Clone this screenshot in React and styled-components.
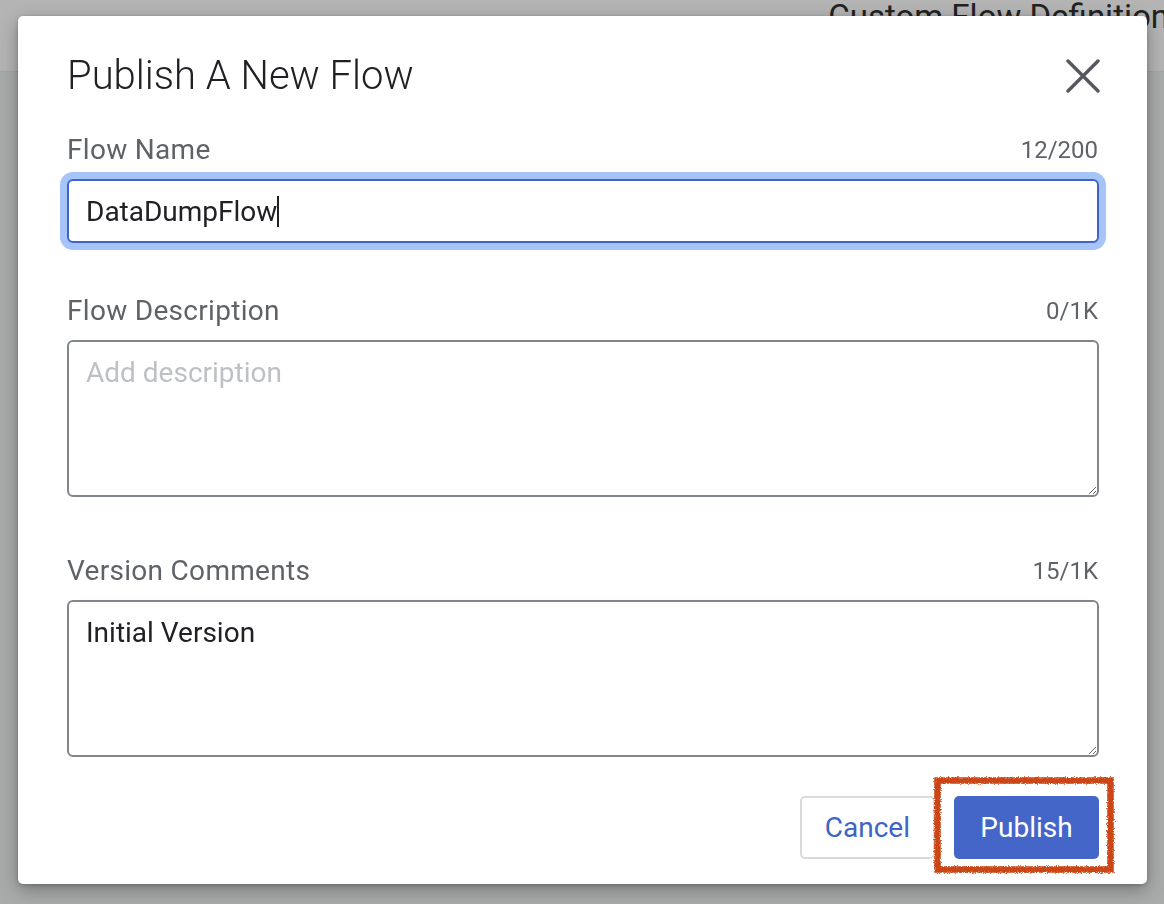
import React from "react";
import styled, { createGlobalStyle } from "styled-components";

const GlobalStyle = createGlobalStyle`
  html, body {
    margin: 0;
    padding: 0;
    height: 100%;
  }
  body {
    font-family: Roboto, "Liberation Sans", Arial, sans-serif;
    background: #a9aaaa;
    overflow: hidden;
  }
`;

const App = () => {
  return (
    <>
      <GlobalStyle />
      <Page>
        <Header>
          <HeaderTitle>Custom Flow Definition</HeaderTitle>
        </Header>
      </Page>

      <Backdrop>
        <Modal>
          <ModalHeader>
            <Title>Publish A New Flow</Title>
            <CloseButton aria-label="Close">
              <svg width="34" height="34" viewBox="0 0 34 34">
                <path
                  d="M2 2 L32 32 M32 2 L2 32"
                  stroke="#55595f"
                  strokeWidth="3.4"
                  strokeLinecap="round"
                />
              </svg>
            </CloseButton>
          </ModalHeader>

          <Field $after={52}>
            <LabelRow>
              <Label>Flow Name</Label>
              <Counter>12/200</Counter>
            </LabelRow>
            <InputWrap>
              <TextInput defaultValue="DataDumpFlow" $focused />
              <Caret />
            </InputWrap>
          </Field>

          <Field $after={58}>
            <LabelRow>
              <Label>Flow Description</Label>
              <Counter>0/1K</Counter>
            </LabelRow>
            <TextArea placeholder="Add description" />
          </Field>

          <Field $after={39}>
            <LabelRow>
              <Label>Version Comments</Label>
              <Counter>15/1K</Counter>
            </LabelRow>
            <TextArea defaultValue="Initial Version" />
          </Field>

          <Footer>
            <Button>Cancel</Button>
            <Highlight>
              <Button $primary>Publish</Button>
              <Scribble viewBox="0 0 182 98" preserveAspectRatio="none">
                <defs>
                  <filter id="rough" x="-10%" y="-10%" width="120%" height="120%">
                    <feTurbulence
                      type="fractalNoise"
                      baseFrequency="0.9"
                      numOctaves="2"
                      seed="3"
                    />
                    <feDisplacementMap in="SourceGraphic" scale="4" />
                  </filter>
                </defs>
                <rect
                  x="4.5"
                  y="4.5"
                  width="173"
                  height="89"
                  fill="none"
                  stroke="#cc4512"
                  strokeWidth="6.5"
                  filter="url(#rough)"
                />
              </Scribble>
            </Highlight>
          </Footer>
        </Modal>
      </Backdrop>
    </>
  );
};

const Page = styled.div`
  height: 100vh;
  background: #a9aaaa;
`;

const Header = styled.header`
  height: 72px;
  background: #b4b4b4;
  border-bottom: 1px solid #a2a3a3;
  display: flex;
  justify-content: flex-end;
  overflow: hidden;
  box-sizing: border-box;
`;

const HeaderTitle = styled.h1`
  margin: -3px -5px 0 0;
  font-size: 33px;
  font-weight: 400;
  line-height: 40px;
  color: #222;
  white-space: nowrap;
`;

const Backdrop = styled.div`
  position: fixed;
  inset: 0;
  display: flex;
  align-items: flex-start;
  padding: 16px 17px 0 18px;
`;

const Modal = styled.div`
  flex: 1;
  background: #fff;
  border-radius: 5px;
  box-shadow: 0 6px 18px rgba(0, 0, 0, 0.3), 0 1px 4px rgba(0, 0, 0, 0.2);
  padding: 36px 48px 25px 49px;
  display: flex;
  flex-direction: column;
`;

const ModalHeader = styled.div`
  display: flex;
  align-items: center;
  justify-content: space-between;
  margin-bottom: 34px;
`;

const Title = styled.h2`
  margin: 0;
  font-size: 40px;
  line-height: 48px;
  font-weight: 300;
  color: #202124;
`;

const CloseButton = styled.button`
  border: 0;
  background: none;
  padding: 0;
  margin-right: -1px;
  display: flex;
  cursor: pointer;
`;

const Field = styled.div`
  display: flex;
  flex-direction: column;
  gap: 13px;
  margin-bottom: ${({ $after }) => $after}px;
`;

const LabelRow = styled.div`
  display: flex;
  align-items: center;
  justify-content: space-between;
  height: 32px;
`;

const Label = styled.label`
  font-size: 28px;
  line-height: 32px;
  color: #5f6368;
  letter-spacing: 0.3px;
`;

const Counter = styled.span`
  font-size: 24px;
  color: #5f6368;
  margin-right: 1px;
`;

const InputWrap = styled.div`
  position: relative;
  display: flex;
  flex-direction: column;
`;

const TextInput = styled.input`
  display: block;
  height: 64px;
  box-sizing: border-box;
  padding: 0 17px;
  font-family: inherit;
  font-size: 28px;
  color: #202124;
  border-radius: 6px;
  border: 2px solid ${({ $focused }) => ($focused ? "#3f63c9" : "#80868b")};
  box-shadow: ${({ $focused }) => ($focused ? "0 0 0 7px #a6c4f7" : "none")};
  outline: none;
`;

const Caret = styled.span`
  position: absolute;
  left: 210px;
  top: 17px;
  width: 2px;
  height: 31px;
  background: #202124;
`;

const TextArea = styled.textarea`
  display: block;
  height: 157px;
  box-sizing: border-box;
  padding: 15px 17px;
  font-family: inherit;
  font-size: 28px;
  line-height: 32px;
  color: #202124;
  border-radius: 6px;
  border: 2px solid #80868b;
  resize: vertical;
  outline: none;

  &::placeholder {
    color: #bdc1c6;
  }
`;

const Footer = styled.div`
  display: flex;
  justify-content: flex-end;
  gap: 19px;
`;

const Highlight = styled.div`
  position: relative;
  display: flex;
`;

const Scribble = styled.svg`
  position: absolute;
  left: -21px;
  top: -20px;
  width: 182px;
  height: 98px;
  pointer-events: none;
  overflow: visible;
`;

const Button = styled.button`
  height: 63px;
  padding: 0 ${({ $primary }) => ($primary ? "25px" : "23px")};
  font-family: inherit;
  font-size: 28px;
  border-radius: 5px;
  cursor: pointer;
  border: ${({ $primary }) => ($primary ? "0" : "2px solid #d8dade")};
  background: ${({ $primary }) => ($primary ? "#4466c8" : "#fff")};
  color: ${({ $primary }) => ($primary ? "#fff" : "#3d64c6")};
  min-width: ${({ $primary }) => ($primary ? "145px" : "135px")};
`;

export default App;
